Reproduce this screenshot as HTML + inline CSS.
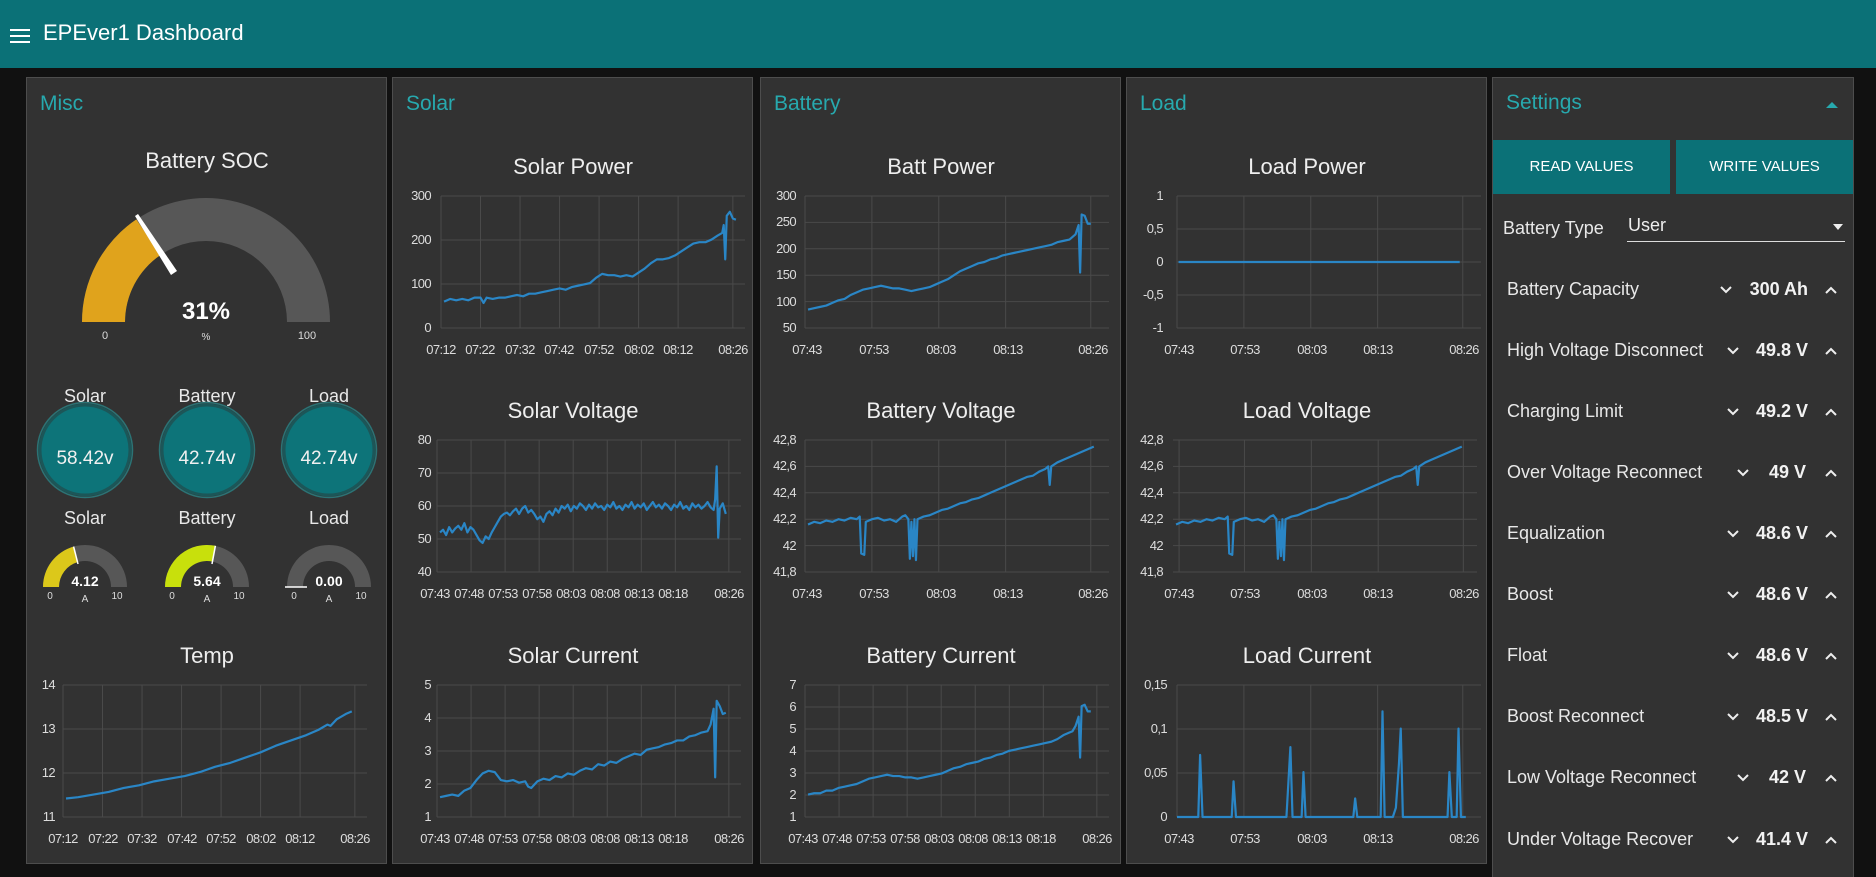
<!DOCTYPE html>
<html><head><meta charset="utf-8"><style>
*{margin:0;padding:0;box-sizing:border-box}
body{width:1876px;height:870px;background:#111;overflow:hidden;font-family:"Liberation Sans",sans-serif;color:#eee;position:relative}
.hdr{position:absolute;left:0;top:0;width:1876px;height:68px;background:#0b7177}
.hdr .ttl{position:absolute;left:43px;top:20px;font-size:22px;color:#fff}
.ham{position:absolute;left:10px;width:20px;height:2px;background:#fff}
.pn{position:absolute;top:77px;width:361px;height:787px;background:#323232;border:1px solid #4d4d4d}
.pt{position:absolute;left:13px;top:14px;font-size:21px;color:#27a9ae}
.ch{position:absolute;left:0}
svg text{font-family:"Liberation Sans",sans-serif}
.t{font-size:22px;fill:#eee}
.a{font-size:13px;fill:#ddd;letter-spacing:-0.6px}
.g line{stroke:#4a4a4a;stroke-width:1;vector-effect:non-scaling-stroke}
.d{fill:none;stroke:#2a86c6;stroke-width:2.2;vector-effect:non-scaling-stroke;stroke-linejoin:round}
.btn{position:absolute;top:62px;height:54px;width:177px;background:#0b7177;color:#fff;font-size:15px;text-align:center;line-height:54px}
.row{position:absolute;left:14px;width:340px;height:24px;font-size:18px;color:#e8e8e8}
.row .v{position:absolute;right:39px;font-weight:bold;color:#f2f2f2;top:0}
.row svg{position:absolute;top:6px}
.dn{left:219px}.up{left:317px}
</style></head><body>
<div class="hdr"><div class="ham" style="top:29px"></div><div class="ham" style="top:35px"></div><div class="ham" style="top:41px"></div><div class="ttl">EPEver1 Dashboard</div></div>

<!-- MISC -->
<div class="pn" style="left:26px">
<div class="pt">Misc</div>
<svg class="ch" style="top:0" width="361" height="540">
<text x="180" y="90" text-anchor="middle" class="t">Battery SOC</text>
<path d="M55 244 A124 124 0 0 1 303 244 L260 244 A81 81 0 0 0 98 244 Z" fill="#575757"/>
<path d="M55 244 A124 124 0 0 1 109.3 141.4 L133.5 177 A81 81 0 0 0 98 244 Z" fill="#e0a31c"/>
<polygon points="108,138 111,136 150,193 144,197" fill="#fff"/>
<text x="179" y="241" text-anchor="middle" style="font-size:24px;font-weight:bold;fill:#fff">31%</text>
<text x="179" y="262" text-anchor="middle" style="font-size:10px;fill:#ddd">%</text>
<text x="78" y="261" text-anchor="middle" style="font-size:11px;fill:#ddd">0</text>
<text x="280" y="261" text-anchor="middle" style="font-size:11px;fill:#ddd">100</text>
<g style="font-size:18px;fill:#e8e8e8" text-anchor="middle">
<text x="58" y="324">Solar</text><text x="180" y="324">Battery</text><text x="302" y="324">Load</text>
<text x="58" y="446">Solar</text><text x="180" y="446">Battery</text><text x="302" y="446">Load</text></g>
<g fill="#0d7479" stroke="#1c5658" stroke-width="3">
<circle cx="58" cy="372" r="45"/><circle cx="180" cy="372" r="45"/><circle cx="302" cy="372" r="45"/></g>
<g fill="none" stroke="#2b7375" stroke-width="1.5">
<circle cx="58" cy="372" r="47.5"/><circle cx="180" cy="372" r="47.5"/><circle cx="302" cy="372" r="47.5"/></g>
<g style="font-size:19px;fill:#f0f0f0" text-anchor="middle">
<text x="58" y="386">58.42v</text><text x="180" y="386">42.74v</text><text x="302" y="386">42.74v</text></g>
<path d="M16 509 A42 42 0 0 1 100 509 L84 509 A26 26 0 0 0 32 509 Z" fill="#575757"/>
<path d="M16 509 A42 42 0 0 1 46.6 468.6 L50.9 484 A26 26 0 0 0 32 509 Z" fill="#dcc81a"/>
<line x1="46.6" y1="468.6" x2="51" y2="486" stroke="#fff" stroke-width="1.5"/>
<path d="M138 509 A42 42 0 0 1 222 509 L206 509 A26 26 0 0 0 154 509 Z" fill="#575757"/>
<path d="M138 509 A42 42 0 0 1 188.4 467.8 L185.2 483.5 A26 26 0 0 0 154 509 Z" fill="#c8e00c"/>
<line x1="188.4" y1="467.8" x2="185" y2="486" stroke="#fff" stroke-width="1.5"/>
<path d="M260 509 A42 42 0 0 1 344 509 L328 509 A26 26 0 0 0 276 509 Z" fill="#575757"/>
<line x1="258" y1="509" x2="280" y2="509" stroke="#fff" stroke-width="1.5"/>
<g style="font-size:14px;font-weight:bold;fill:#fff" text-anchor="middle">
<text x="58" y="508">4.12</text><text x="180" y="508">5.64</text><text x="302" y="508">0.00</text></g>
<g style="font-size:10px;fill:#ddd" text-anchor="middle">
<text x="23" y="521">0</text><text x="58" y="524">A</text><text x="90" y="521">10</text>
<text x="145" y="521">0</text><text x="180" y="524">A</text><text x="212" y="521">10</text>
<text x="267" y="521">0</text><text x="302" y="524">A</text><text x="334" y="521">10</text></g>
</svg>
<svg class="ch" style="top:552px" width="361" height="245">
<text x="180" y="33" text-anchor="middle" class="t">Temp</text>
<g class="a" text-anchor="end"><text x="28" y="59">14</text><text x="28" y="103">13</text><text x="28" y="147">12</text><text x="28" y="191">11</text></g>
<g class="a" text-anchor="middle"><text x="36" y="213">07:12</text><text x="76" y="213">07:22</text><text x="115" y="213">07:32</text><text x="155" y="213">07:42</text><text x="194" y="213">07:52</text><text x="234" y="213">08:02</text><text x="273" y="213">08:12</text><text x="328" y="213">08:26</text></g>
<svg x="36" y="55" width="304" height="132" viewBox="0 0 100 100" preserveAspectRatio="none" overflow="visible">
<g class="g"><line x1="0" y1="0" x2="100" y2="0"/><line x1="0" y1="33.3" x2="100" y2="33.3"/><line x1="0" y1="66.7" x2="100" y2="66.7"/><line x1="0" y1="100" x2="100" y2="100"/>
<line x1="0" y1="0" x2="0" y2="100"/><line x1="13" y1="0" x2="13" y2="100"/><line x1="26" y1="0" x2="26" y2="100"/><line x1="39" y1="0" x2="39" y2="100"/><line x1="52" y1="0" x2="52" y2="100"/><line x1="65" y1="0" x2="65" y2="100"/><line x1="78" y1="0" x2="78" y2="100"/><line x1="96" y1="0" x2="96" y2="100"/></g>
<polyline class="d" points="1,86 5,85 10,83 15,81 20,78 25,76 30,73 35,71 40,69 45,66 50,62 55,59 60,55 65,51 70,46 75,42 80,38 84,34 87,30 88,31 90,26 93,22 95,20"/>
</svg></svg>
</div>

<!-- SOLAR -->
<div class="pn" style="left:392px">
<div class="pt">Solar</div>
<svg class="ch" style="top:63px" width="361" height="245">
<text x="180" y="33" text-anchor="middle" class="t">Solar Power</text>
<g class="a" text-anchor="end"><text x="38" y="59">300</text><text x="38" y="103">200</text><text x="38" y="147">100</text><text x="38" y="191">0</text></g>
<g class="a" text-anchor="middle"><text x="48" y="213">07:12</text><text x="87" y="213">07:22</text><text x="127" y="213">07:32</text><text x="166" y="213">07:42</text><text x="206" y="213">07:52</text><text x="246" y="213">08:02</text><text x="285" y="213">08:12</text><text x="340" y="213">08:26</text></g>
<svg x="48" y="55" width="304" height="132" viewBox="0 0 100 100" preserveAspectRatio="none" overflow="visible">
<g class="g"><line x1="0" y1="0" x2="100" y2="0"/><line x1="0" y1="33.3" x2="100" y2="33.3"/><line x1="0" y1="66.7" x2="100" y2="66.7"/><line x1="0" y1="100" x2="100" y2="100"/>
<line x1="0" y1="0" x2="0" y2="100"/><line x1="13" y1="0" x2="13" y2="100"/><line x1="26" y1="0" x2="26" y2="100"/><line x1="39" y1="0" x2="39" y2="100"/><line x1="52" y1="0" x2="52" y2="100"/><line x1="65" y1="0" x2="65" y2="100"/><line x1="78" y1="0" x2="78" y2="100"/><line x1="96" y1="0" x2="96" y2="100"/></g>
<polyline class="d" points="1,80 3,78 5,79 7,78 9,79 11,77 13,77 14,81 15,77 17,78 19,77 21,77 23,76 25,75 27,76 29,74 31,74 33,73 35,72 37,71 39,70 41,71 43,69 45,68 47,67 49,66 51,62 53,59 55,60 57,60 59,61 61,60 63,61 65,58 67,55 69,51 71,48 73,48 75,47 77,45 79,42 81,39 83,36 85,35 87,35 89,33 91,30 92.5,28 93,22 93.5,48 94,15 95,12 96,17 97,18"/>
</svg></svg>
<svg class="ch" style="top:307px" width="361" height="245">
<text x="180" y="33" text-anchor="middle" class="t">Solar Voltage</text>
<g class="a" text-anchor="end"><text x="38" y="59">80</text><text x="38" y="92">70</text><text x="38" y="125">60</text><text x="38" y="158">50</text><text x="38" y="191">40</text></g>
<g class="a" text-anchor="middle"><text x="42" y="213">07:43</text><text x="76" y="213">07:48</text><text x="110" y="213">07:53</text><text x="144" y="213">07:58</text><text x="178" y="213">08:03</text><text x="212" y="213">08:08</text><text x="246" y="213">08:13</text><text x="280" y="213">08:18</text><text x="336" y="213">08:26</text></g>
<svg x="44" y="55" width="304" height="132" viewBox="0 0 100 100" preserveAspectRatio="none" overflow="visible">
<g class="g"><line x1="0" y1="0" x2="100" y2="0"/><line x1="0" y1="25" x2="100" y2="25"/><line x1="0" y1="50" x2="100" y2="50"/><line x1="0" y1="75" x2="100" y2="75"/><line x1="0" y1="100" x2="100" y2="100"/>
<line x1="0" y1="0" x2="0" y2="100"/><line x1="11.2" y1="0" x2="11.2" y2="100"/><line x1="22.4" y1="0" x2="22.4" y2="100"/><line x1="33.6" y1="0" x2="33.6" y2="100"/><line x1="44.8" y1="0" x2="44.8" y2="100"/><line x1="56" y1="0" x2="56" y2="100"/><line x1="67.2" y1="0" x2="67.2" y2="100"/><line x1="78.4" y1="0" x2="78.4" y2="100"/><line x1="96" y1="0" x2="96" y2="100"/></g>
<polyline class="d" points="1,70 2,68 3,72 4,66 5,70 6,67 7,65 8,68 9,63 10,70 11,66 12,68 13,72 14,76 15,78 16,73 17,75 18,70 19,66 20,62 21,58 22,56 23,55 24,57 25,54 26,52 27,56 28,52 29,50 30,55 31,53 32,56 33,60 34,58 35,62 36,56 37,54 38,57 39,52 40,55 41,50 42,52 43,49 44,54 45,50 46,52 47,48 48,50 49,53 50,49 51,52 52,48 53,51 54,50 55,53 56,49 57,51 58,47 59,52 60,50 61,53 62,49 63,51 64,47 65,52 66,49 67,51 68,48 69,53 70,50 71,47 72,51 73,49 74,52 75,48 76,50 77,53 78,49 79,51 80,47 81,52 82,50 83,53 84,48 85,51 86,49 87,52 88,50 89,47 90,51 91,53 91.5,45 92,20 92.5,74 93,52 94,48 95,56"/>
</svg></svg>
<svg class="ch" style="top:552px" width="361" height="245">
<text x="180" y="33" text-anchor="middle" class="t">Solar Current</text>
<g class="a" text-anchor="end"><text x="38" y="59">5</text><text x="38" y="92">4</text><text x="38" y="125">3</text><text x="38" y="158">2</text><text x="38" y="191">1</text></g>
<g class="a" text-anchor="middle"><text x="42" y="213">07:43</text><text x="76" y="213">07:48</text><text x="110" y="213">07:53</text><text x="144" y="213">07:58</text><text x="178" y="213">08:03</text><text x="212" y="213">08:08</text><text x="246" y="213">08:13</text><text x="280" y="213">08:18</text><text x="336" y="213">08:26</text></g>
<svg x="44" y="55" width="304" height="132" viewBox="0 0 100 100" preserveAspectRatio="none" overflow="visible">
<g class="g"><line x1="0" y1="0" x2="100" y2="0"/><line x1="0" y1="25" x2="100" y2="25"/><line x1="0" y1="50" x2="100" y2="50"/><line x1="0" y1="75" x2="100" y2="75"/><line x1="0" y1="100" x2="100" y2="100"/>
<line x1="0" y1="0" x2="0" y2="100"/><line x1="11.2" y1="0" x2="11.2" y2="100"/><line x1="22.4" y1="0" x2="22.4" y2="100"/><line x1="33.6" y1="0" x2="33.6" y2="100"/><line x1="44.8" y1="0" x2="44.8" y2="100"/><line x1="56" y1="0" x2="56" y2="100"/><line x1="67.2" y1="0" x2="67.2" y2="100"/><line x1="78.4" y1="0" x2="78.4" y2="100"/><line x1="96" y1="0" x2="96" y2="100"/></g>
<polyline class="d" points="1,85 3,84 5,83 7,84 9,80 11,78 13,72 15,67 17,65 19,66 21,72 23,73 25,72 27,74 29,73 30,77 31,78 33,73 35,71 37,72 39,69 41,70 43,67 45,68 47,65 49,63 51,64 53,60 55,61 57,58 59,59 61,56 63,54 65,52 67,53 69,49 71,48 73,47 75,45 77,44 79,42 81,42 83,39 85,38 87,36 89,35 90,30 91,18 91.5,70 92,12 93,16 94,22 95,21"/>
</svg></svg>
</div>

<!-- BATTERY -->
<div class="pn" style="left:760px">
<div class="pt">Battery</div>
<svg class="ch" style="top:63px" width="361" height="245">
<text x="180" y="33" text-anchor="middle" class="t">Batt Power</text>
<g class="a" text-anchor="end"><text x="35" y="59">300</text><text x="35" y="85">250</text><text x="35" y="112">200</text><text x="35" y="138">150</text><text x="35" y="165">100</text><text x="35" y="191">50</text></g>
<g class="a" text-anchor="middle"><text x="46" y="213">07:43</text><text x="113" y="213">07:53</text><text x="180" y="213">08:03</text><text x="247" y="213">08:13</text><text x="332" y="213">08:26</text></g>
<svg x="44" y="55" width="304" height="132" viewBox="0 0 100 100" preserveAspectRatio="none" overflow="visible">
<g class="g"><line x1="0" y1="0" x2="100" y2="0"/><line x1="0" y1="20" x2="100" y2="20"/><line x1="0" y1="40" x2="100" y2="40"/><line x1="0" y1="60" x2="100" y2="60"/><line x1="0" y1="80" x2="100" y2="80"/><line x1="0" y1="100" x2="100" y2="100"/>
<line x1="0" y1="0" x2="0" y2="100"/><line x1="22" y1="0" x2="22" y2="100"/><line x1="44" y1="0" x2="44" y2="100"/><line x1="66" y1="0" x2="66" y2="100"/><line x1="94" y1="0" x2="94" y2="100"/></g>
<polyline class="d" points="1,86 3,85 5,84 7,83 9,81 11,79 13,78 15,75 17,73 19,71 21,70 23,69 25,68 27,69 29,70 31,70 33,71 35,72 37,71 39,70 41,69 43,67 45,65 47,63 49,60 51,57 53,55 55,53 57,51 59,50 61,48 63,47 65,45 67,44 69,43 71,42 73,41 75,40 77,39 79,38 81,37 83,35 85,34 87,33 88,31 89,29 90,22 90.5,58 91,14 92,15 93,21 94,21"/>
</svg></svg>
<svg class="ch" style="top:307px" width="361" height="245">
<text x="180" y="33" text-anchor="middle" class="t">Battery Voltage</text>
<g class="a" text-anchor="end"><text x="35" y="59">42,8</text><text x="35" y="85">42,6</text><text x="35" y="112">42,4</text><text x="35" y="138">42,2</text><text x="35" y="165">42</text><text x="35" y="191">41,8</text></g>
<g class="a" text-anchor="middle"><text x="46" y="213">07:43</text><text x="113" y="213">07:53</text><text x="180" y="213">08:03</text><text x="247" y="213">08:13</text><text x="332" y="213">08:26</text></g>
<svg x="44" y="55" width="304" height="132" viewBox="0 0 100 100" preserveAspectRatio="none" overflow="visible">
<g class="g"><line x1="0" y1="0" x2="100" y2="0"/><line x1="0" y1="20" x2="100" y2="20"/><line x1="0" y1="40" x2="100" y2="40"/><line x1="0" y1="60" x2="100" y2="60"/><line x1="0" y1="80" x2="100" y2="80"/><line x1="0" y1="100" x2="100" y2="100"/>
<line x1="0" y1="0" x2="0" y2="100"/><line x1="22" y1="0" x2="22" y2="100"/><line x1="44" y1="0" x2="44" y2="100"/><line x1="66" y1="0" x2="66" y2="100"/><line x1="94" y1="0" x2="94" y2="100"/></g>
<polyline class="d" points="1,64 3,62 5,63 7,61 9,62 11,60 13,61 15,59 17,60 18,58 18.5,86 19.5,87 20,62 22,60 24,59 26,61 28,60 30,62 32,58 33,57 34,60 34.5,90 35,62 35.5,88 36,60 36.5,91 37,60 39,58 41,57 43,55 45,53 47,52 49,50 51,48 53,47 55,45 57,44 59,42 61,40 63,38 65,36 67,34 69,32 71,30 73,28 75,27 77,24 79,22 80,20 80.5,34 81,20 83,17 85,15 87,13 89,11 91,9 93,7 95,5"/>
</svg></svg>
<svg class="ch" style="top:552px" width="361" height="245">
<text x="180" y="33" text-anchor="middle" class="t">Battery Current</text>
<g class="a" text-anchor="end"><text x="35" y="59">7</text><text x="35" y="81">6</text><text x="35" y="103">5</text><text x="35" y="125">4</text><text x="35" y="147">3</text><text x="35" y="169">2</text><text x="35" y="191">1</text></g>
<g class="a" text-anchor="middle"><text x="42" y="213">07:43</text><text x="76" y="213">07:48</text><text x="110" y="213">07:53</text><text x="144" y="213">07:58</text><text x="178" y="213">08:03</text><text x="212" y="213">08:08</text><text x="246" y="213">08:13</text><text x="280" y="213">08:18</text><text x="336" y="213">08:26</text></g>
<svg x="44" y="55" width="304" height="132" viewBox="0 0 100 100" preserveAspectRatio="none" overflow="visible">
<g class="g"><line x1="0" y1="0" x2="100" y2="0"/><line x1="0" y1="16.7" x2="100" y2="16.7"/><line x1="0" y1="33.3" x2="100" y2="33.3"/><line x1="0" y1="50" x2="100" y2="50"/><line x1="0" y1="66.7" x2="100" y2="66.7"/><line x1="0" y1="83.3" x2="100" y2="83.3"/><line x1="0" y1="100" x2="100" y2="100"/>
<line x1="0" y1="0" x2="0" y2="100"/><line x1="11.2" y1="0" x2="11.2" y2="100"/><line x1="22.4" y1="0" x2="22.4" y2="100"/><line x1="33.6" y1="0" x2="33.6" y2="100"/><line x1="44.8" y1="0" x2="44.8" y2="100"/><line x1="56" y1="0" x2="56" y2="100"/><line x1="67.2" y1="0" x2="67.2" y2="100"/><line x1="78.4" y1="0" x2="78.4" y2="100"/><line x1="96" y1="0" x2="96" y2="100"/></g>
<polyline class="d" points="1,83 3,82 5,82 7,80 9,80 11,78 13,77 15,76 17,75 19,73 21,71 23,70 25,69 27,68 29,69 31,69 33,70 35,70 37,71 39,70 41,69 43,68 45,67 47,65 49,63 51,62 53,60 55,59 57,58 59,56 61,55 63,53 65,52 67,50 69,49 71,48 73,47 75,46 77,45 79,44 81,43 83,41 85,38 87,36 88,35 89,31 90,24 90.5,55 91,16 92,15 93,20 94,20"/>
</svg></svg>
</div>

<!-- LOAD -->
<div class="pn" style="left:1126px">
<div class="pt">Load</div>
<svg class="ch" style="top:63px" width="361" height="245">
<text x="180" y="33" text-anchor="middle" class="t">Load Power</text>
<g class="a" text-anchor="end"><text x="36" y="59">1</text><text x="36" y="92">0,5</text><text x="36" y="125">0</text><text x="36" y="158">-0,5</text><text x="36" y="191">-1</text></g>
<g class="a" text-anchor="middle"><text x="52" y="213">07:43</text><text x="118" y="213">07:53</text><text x="185" y="213">08:03</text><text x="251" y="213">08:13</text><text x="337" y="213">08:26</text></g>
<svg x="50" y="55" width="304" height="132" viewBox="0 0 100 100" preserveAspectRatio="none" overflow="visible">
<g class="g"><line x1="0" y1="0" x2="100" y2="0"/><line x1="0" y1="25" x2="100" y2="25"/><line x1="0" y1="50" x2="100" y2="50"/><line x1="0" y1="75" x2="100" y2="75"/><line x1="0" y1="100" x2="100" y2="100"/>
<line x1="0" y1="0" x2="0" y2="100"/><line x1="22" y1="0" x2="22" y2="100"/><line x1="44" y1="0" x2="44" y2="100"/><line x1="66" y1="0" x2="66" y2="100"/><line x1="94" y1="0" x2="94" y2="100"/></g>
<polyline class="d" points="0.5,50 93,50"/>
</svg></svg>
<svg class="ch" style="top:307px" width="361" height="245">
<text x="180" y="33" text-anchor="middle" class="t">Load Voltage</text>
<g class="a" text-anchor="end"><text x="36" y="59">42,8</text><text x="36" y="85">42,6</text><text x="36" y="112">42,4</text><text x="36" y="138">42,2</text><text x="36" y="165">42</text><text x="36" y="191">41,8</text></g>
<g class="a" text-anchor="middle"><text x="52" y="213">07:43</text><text x="118" y="213">07:53</text><text x="185" y="213">08:03</text><text x="251" y="213">08:13</text><text x="337" y="213">08:26</text></g>
<svg x="46" y="55" width="304" height="132" viewBox="0 0 100 100" preserveAspectRatio="none" overflow="visible">
<g class="g"><line x1="0" y1="0" x2="100" y2="0"/><line x1="0" y1="20" x2="100" y2="20"/><line x1="0" y1="40" x2="100" y2="40"/><line x1="0" y1="60" x2="100" y2="60"/><line x1="0" y1="80" x2="100" y2="80"/><line x1="0" y1="100" x2="100" y2="100"/>
<line x1="2" y1="0" x2="2" y2="100"/><line x1="23.5" y1="0" x2="23.5" y2="100"/><line x1="45.5" y1="0" x2="45.5" y2="100"/><line x1="67.5" y1="0" x2="67.5" y2="100"/><line x1="95.5" y1="0" x2="95.5" y2="100"/></g>
<polyline class="d" points="1,64 3,62 5,63 7,61 9,62 11,60 13,61 15,59 17,60 18,58 18.5,86 19.5,87 20,62 22,60 24,59 26,61 28,60 30,62 32,58 33,57 34,60 34.5,90 35,62 35.5,88 36,60 36.5,91 37,60 39,58 41,57 43,55 45,53 47,52 49,50 51,48 53,47 55,45 57,44 59,42 61,40 63,38 65,36 67,34 69,32 71,30 73,28 75,27 77,24 79,22 80,20 80.5,34 81,20 83,17 85,15 87,13 89,11 91,9 93,7 95,5"/>
</svg></svg>
<svg class="ch" style="top:552px" width="361" height="245">
<text x="180" y="33" text-anchor="middle" class="t">Load Current</text>
<g class="a" text-anchor="end"><text x="40" y="59">0,15</text><text x="40" y="103">0,1</text><text x="40" y="147">0,05</text><text x="40" y="191">0</text></g>
<g class="a" text-anchor="middle"><text x="52" y="213">07:43</text><text x="118" y="213">07:53</text><text x="185" y="213">08:03</text><text x="251" y="213">08:13</text><text x="337" y="213">08:26</text></g>
<svg x="50" y="55" width="304" height="132" viewBox="0 0 100 100" preserveAspectRatio="none" overflow="visible">
<g class="g"><line x1="0" y1="0" x2="100" y2="0"/><line x1="0" y1="33.3" x2="100" y2="33.3"/><line x1="0" y1="66.7" x2="100" y2="66.7"/><line x1="0" y1="100" x2="100" y2="100"/>
<line x1="0" y1="0" x2="0" y2="100"/><line x1="22" y1="0" x2="22" y2="100"/><line x1="44" y1="0" x2="44" y2="100"/><line x1="66" y1="0" x2="66" y2="100"/><line x1="94" y1="0" x2="94" y2="100"/></g>
<polyline class="d" points="0,100 7,100 7.6,53 8.4,100 18,100 18.6,73 19.4,100 36,100 37.3,47 38,100 41,100 41.6,66 42.3,100 58,100 58.6,86 59.3,100 67,100 67.6,20 68.3,100 71,100 72,93 73,60 73.6,33 74.3,100 89,100 89.6,66 90.4,100 92,100 92.6,33 93.4,100 95,100"/>
</svg></svg>
</div>

<!-- SETTINGS -->
<div class="pn" style="left:1492px;width:362px;height:800px;border-bottom:none">
<div class="pt" style="top:13px">Settings</div>
<svg style="position:absolute;left:333px;top:23px" width="12" height="8"><polygon points="0,7 6,1 12,7" fill="#27a9ae"/></svg>
<div class="btn" style="left:0">READ VALUES</div>
<div class="btn" style="left:183px">WRITE VALUES</div>
<div style="position:absolute;left:10px;top:140px;font-size:18px;color:#e8e8e8">Battery Type</div>
<div style="position:absolute;left:135px;top:137px;font-size:18px;color:#eee">User</div>
<div style="position:absolute;left:134px;top:163px;width:218px;height:1px;background:#ddd"></div>
<svg style="position:absolute;left:340px;top:146px" width="10" height="6"><polygon points="0,0 10,0 5,6" fill="#eee"/></svg>
<div class="row" style="top:201px">Battery Capacity<span class="v">300 Ah</span><svg style="left:212px" width="14" height="10"><polyline points="2,2 7,7 12,2" fill="none" stroke="#eee" stroke-width="2"/></svg><svg class="up" width="14" height="10"><polyline points="2,8 7,3 12,8" fill="none" stroke="#eee" stroke-width="2"/></svg></div>
<div class="row" style="top:262px">High Voltage Disconnect<span class="v">49.8 V</span><svg class="dn" width="14" height="10"><polyline points="2,2 7,7 12,2" fill="none" stroke="#eee" stroke-width="2"/></svg><svg class="up" width="14" height="10"><polyline points="2,8 7,3 12,8" fill="none" stroke="#eee" stroke-width="2"/></svg></div>
<div class="row" style="top:323px">Charging Limit<span class="v">49.2 V</span><svg class="dn" width="14" height="10"><polyline points="2,2 7,7 12,2" fill="none" stroke="#eee" stroke-width="2"/></svg><svg class="up" width="14" height="10"><polyline points="2,8 7,3 12,8" fill="none" stroke="#eee" stroke-width="2"/></svg></div>
<div class="row" style="top:384px">Over Voltage Reconnect<span class="v" style="right:41px">49 V</span><svg style="left:229px" width="14" height="10"><polyline points="2,2 7,7 12,2" fill="none" stroke="#eee" stroke-width="2"/></svg><svg class="up" width="14" height="10"><polyline points="2,8 7,3 12,8" fill="none" stroke="#eee" stroke-width="2"/></svg></div>
<div class="row" style="top:445px">Equalization<span class="v">48.6 V</span><svg class="dn" width="14" height="10"><polyline points="2,2 7,7 12,2" fill="none" stroke="#eee" stroke-width="2"/></svg><svg class="up" width="14" height="10"><polyline points="2,8 7,3 12,8" fill="none" stroke="#eee" stroke-width="2"/></svg></div>
<div class="row" style="top:506px">Boost<span class="v">48.6 V</span><svg class="dn" width="14" height="10"><polyline points="2,2 7,7 12,2" fill="none" stroke="#eee" stroke-width="2"/></svg><svg class="up" width="14" height="10"><polyline points="2,8 7,3 12,8" fill="none" stroke="#eee" stroke-width="2"/></svg></div>
<div class="row" style="top:567px">Float<span class="v">48.6 V</span><svg class="dn" width="14" height="10"><polyline points="2,2 7,7 12,2" fill="none" stroke="#eee" stroke-width="2"/></svg><svg class="up" width="14" height="10"><polyline points="2,8 7,3 12,8" fill="none" stroke="#eee" stroke-width="2"/></svg></div>
<div class="row" style="top:628px">Boost Reconnect<span class="v">48.5 V</span><svg class="dn" width="14" height="10"><polyline points="2,2 7,7 12,2" fill="none" stroke="#eee" stroke-width="2"/></svg><svg class="up" width="14" height="10"><polyline points="2,8 7,3 12,8" fill="none" stroke="#eee" stroke-width="2"/></svg></div>
<div class="row" style="top:689px">Low Voltage Reconnect<span class="v" style="right:41px">42 V</span><svg style="left:229px" width="14" height="10"><polyline points="2,2 7,7 12,2" fill="none" stroke="#eee" stroke-width="2"/></svg><svg class="up" width="14" height="10"><polyline points="2,8 7,3 12,8" fill="none" stroke="#eee" stroke-width="2"/></svg></div>
<div class="row" style="top:751px">Under Voltage Recover<span class="v">41.4 V</span><svg class="dn" width="14" height="10"><polyline points="2,2 7,7 12,2" fill="none" stroke="#eee" stroke-width="2"/></svg><svg class="up" width="14" height="10"><polyline points="2,8 7,3 12,8" fill="none" stroke="#eee" stroke-width="2"/></svg></div>
</div>
</body></html>
